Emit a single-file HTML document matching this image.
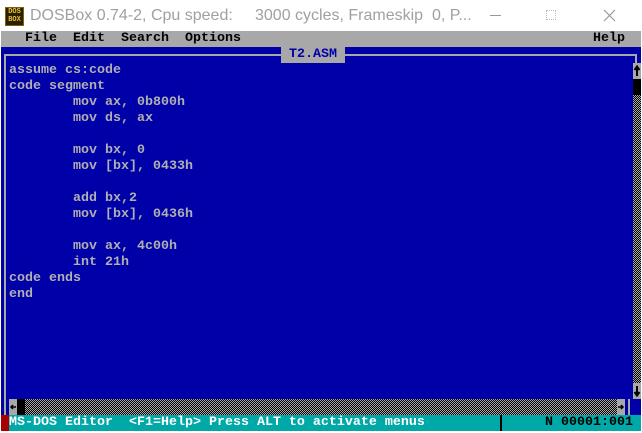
<!DOCTYPE html>
<html><head><meta charset="utf-8"><style>
*{margin:0;padding:0;box-sizing:border-box}
body{width:642px;height:433px;overflow:hidden;background:#fff;position:relative;font-family:"Liberation Mono",monospace}
.a{position:absolute}
.t{font-size:13.33px;line-height:16px;white-space:pre;font-weight:bold;letter-spacing:0}
.dot{background-color:#a8a8a8;background-image:repeating-conic-gradient(#000 0 25%,transparent 0 50%);background-size:2px 2px}
</style></head><body>
<!-- title bar -->
<div class="a" style="left:5px;top:7px;width:19px;height:19px;background:#2a2000;border:1px solid #806000"></div>
<div class="a" style="left:6px;top:8px;font:bold 7px/8px 'Liberation Mono',monospace;color:#e8c040;width:17px;text-align:center">DOS<br>BOX</div>
<div class="a" style="left:30px;top:6px;font:16px/20px 'Liberation Sans',sans-serif;color:#a0a0a0;white-space:pre">DOSBox 0.74-2, Cpu speed:     3000 cycles, Frameskip  0, P...</div>
<div class="a" style="left:490px;top:15px;width:11px;height:1px;background:#999"></div>
<div class="a" style="left:546px;top:10px;width:10px;height:10px;border:1px dotted #bbb"></div>
<svg class="a" style="left:603px;top:9px" width="13" height="13"><path d="M1 1L12 12M12 1L1 12" stroke="#999" stroke-width="1.2"/></svg>
<!-- dos screen -->
<div class="a" style="left:1px;top:31px;width:640px;height:400px;background:#0000a8"></div>
<div class="a t" style="left:1px;top:31px;width:640px;height:16px;background:#a8a8a8;color:#000">   File  Edit  Search  Options</div>
<div class="a t" style="left:593px;top:31px;color:#000">Help</div>
<!-- border lines -->
<div class="a" style="left:4px;top:54px;width:633px;height:2px;background:#a8a8a8"></div>
<div class="a" style="left:4px;top:54px;width:2px;height:361px;background:#a8a8a8"></div>
<div class="a" style="left:635px;top:54px;width:2px;height:10px;background:#a8a8a8"></div>
<div class="a t" style="left:281px;top:47px;width:64px;height:16px;background:#a8a8a8;color:#0000a8;text-align:center"> T2.ASM </div>
<!-- code -->
<div class="a t" style="left:9px;top:63px;color:#b0b0b0">assume cs:code
code segment
        mov ax, 0b800h
        mov ds, ax

        mov bx, 0
        mov [bx], 0433h

        add bx,2
        mov [bx], 0436h

        mov ax, 4c00h
        int 21h
code ends
end</div>
<!-- vertical scrollbar -->
<div class="a dot" style="left:633px;top:63px;width:8px;height:336px"></div>
<div class="a" style="left:633px;top:63px;width:8px;height:16px;background:#a8a8a8"></div>
<svg class="a" style="left:633px;top:63px" width="8" height="16"><path d="M4 13V4M1.5 7L4 3.5L6.5 7" stroke="#000" stroke-width="2" fill="none"/></svg>
<div class="a" style="left:633px;top:79px;width:8px;height:16px;background:#000"></div>
<div class="a" style="left:633px;top:383px;width:8px;height:16px;background:#a8a8a8"></div>
<svg class="a" style="left:633px;top:383px" width="8" height="16"><path d="M4 3V12M1.5 9L4 12.5L6.5 9" stroke="#000" stroke-width="2" fill="none"/></svg>
<!-- horizontal scrollbar -->
<div class="a dot" style="left:9px;top:399px;width:616px;height:16px"></div>
<div class="a" style="left:9px;top:399px;width:8px;height:16px;background:#a8a8a8"></div>
<svg class="a" style="left:9px;top:399px" width="8" height="16"><path d="M7 8H2M4 6L2 8L4 10" stroke="#000" stroke-width="1.5" fill="none"/></svg>
<div class="a" style="left:17px;top:399px;width:8px;height:16px;background:#000"></div>
<div class="a" style="left:617px;top:399px;width:8px;height:16px;background:#a8a8a8"></div>
<svg class="a" style="left:617px;top:399px" width="8" height="16"><path d="M1 8H6M4 6L6 8L4 10" stroke="#000" stroke-width="1.5" fill="none"/></svg>
<div class="a" style="left:628px;top:399px;width:2px;height:16px;background:#a8a8a8"></div>
<!-- status -->
<div class="a t" style="left:1px;top:415px;width:640px;height:16px;background:#00a8a8;color:#fff"> MS-DOS Editor  &lt;F1=Help&gt; Press ALT to activate menus</div>
<div class="a" style="left:1px;top:415px;width:8px;height:16px;background:#a80000"></div>
<div class="a" style="left:500px;top:415px;width:2px;height:16px;background:#000"></div>
<div class="a t" style="left:545px;top:415px;color:#000">N 00001:001</div>
</body></html>
